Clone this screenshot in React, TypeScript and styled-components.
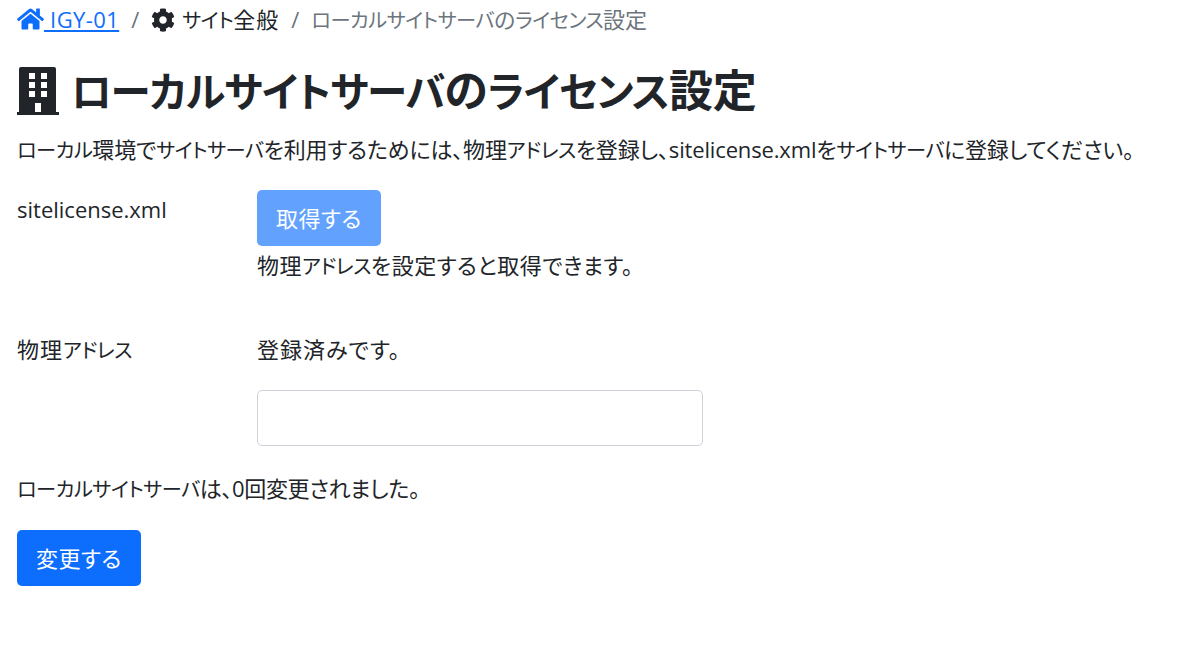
import React from 'react';
import styled, { createGlobalStyle } from 'styled-components';
import { FaCog, FaHome } from 'react-icons/fa';

const GlobalStyle = createGlobalStyle`
  html, body { margin: 0; padding: 0; background: #fff; }
  body {
    font-family: "Open Sans", "Noto Sans CJK JP", sans-serif;
    font-feature-settings: "palt";
    font-size: 22px;
    line-height: 33px;
    color: #212529;
  }
  * { box-sizing: border-box; }
`;

const Page = styled.div`
  padding: 3px 17px 0;
`;

const Breadcrumb = styled.nav`
  display: flex;
  align-items: center;
  height: 33px;
  margin-bottom: 25px;
`;

const CrumbLink = styled.a`
  color: #0d6efd;
  text-decoration: underline;
  white-space: pre;
  letter-spacing: 0.4px;
  svg {
    width: 27px;
    height: 24px;
    vertical-align: -3px;
  }
`;

const Crumb = styled.span`
  display: inline-flex;
  align-items: center;
  gap: 7px;
  letter-spacing: 1px;
  svg {
    width: 24px;
    height: 24px;
  }
`;

const Separator = styled.span`
  color: #6c757d;
  padding: 0 12px;
`;

const Current = styled.span`
  color: #6c757d;
`;

// katakana runs are set tighter, the reference font squeezes them
const KanaRun = styled.span`
  font-size: 0.92em;
  letter-spacing: -0.025em;
`;

const Title = styled.h1`
  display: flex;
  align-items: center;
  gap: 12px;
  height: 60px;
  margin: 0;
  font-size: 44px;
  line-height: 60px;
  font-weight: 700;
  letter-spacing: -0.1px;
`;

const TitleIcon = styled.svg`
  width: 42px;
  height: 48px;
  flex: none;
  fill: currentColor;
`;

const Lead = styled.p`
  margin: 12px 0 0;
  white-space: nowrap;
  letter-spacing: -0.15px;
`;

const FormRow = styled.div`
  display: grid;
  grid-template-columns: 240px 1fr;
  margin-top: 23px;
`;

const SecondRow = styled(FormRow)`
  margin-top: 50px;
`;

const Field = styled.div`
  min-width: 0;
`;

const FieldLabel = styled.div`
  padding-top: 3px;
`;

const SecondLabel = styled.div`
  letter-spacing: 1px;
`;

const Hint = styled.div`
  padding-top: 3px;
  letter-spacing: 0.5px;
`;

const Status = styled.div`
  letter-spacing: 1px;
`;

const Button = styled.button<{ $faded?: boolean }>`
  display: block;
  height: 56px;
  padding: 0 19px;
  border: 0;
  border-radius: 5px;
  font: inherit;
  letter-spacing: 0.5px;
  color: #fff;
  background: ${({ $faded }) => ($faded ? '#62a2fe' : '#0d6efd')};
`;

const Input = styled.input`
  display: block;
  width: 446px;
  height: 56px;
  margin-top: 24px;
  border: 1px solid #ced4da;
  border-radius: 5px;
`;

const Note = styled.p`
  margin: 26px 0 0;
  letter-spacing: -0.35px;
`;

const SubmitRow = styled.div`
  margin-top: 24px;
`;

const Jp = ({ text }: { text: string }): JSX.Element => (
  <>
    {text.split(/([ァ-ヶー]+)/).map((part, index) => (
      index % 2 === 1 ? <KanaRun key={index}>{part}</KanaRun> : part
    ))}
  </>
);

const BuildingIcon = (): JSX.Element => (
  <TitleIcon viewBox="0 0 42 48">
    <path fillRule="evenodd" d="M4 0h33a2 2 0 0 1 2 2v43h3v3H0v-3h2V2a2 2 0 0 1 2-2zM12 6v6h6V6zm12 0v6h6V6zM12 15v6h6v-6zm12 0v6h6v-6zM12 24v6h6v-6zm12 0v6h6v-6zM18 36v9h6v-9z" />
  </TitleIcon>
);

const App = (): JSX.Element => (
  <Page>
    <GlobalStyle />
    <Breadcrumb>
      <CrumbLink href="#"><FaHome /> IGY-01</CrumbLink>
      <Separator>/</Separator>
      <Crumb><FaCog /><span><Jp text="サイト全般" /></span></Crumb>
      <Separator>/</Separator>
      <Current><Jp text="ローカルサイトサーバのライセンス設定" /></Current>
    </Breadcrumb>
    <Title><BuildingIcon /><span><Jp text="ローカルサイトサーバのライセンス設定" /></span></Title>
    <Lead><Jp text="ローカル環境でサイトサーバを利用するためには、物理アドレスを登録し、sitelicense.xmlをサイトサーバに登録してください。" /></Lead>
    <FormRow>
      <FieldLabel>sitelicense.xml</FieldLabel>
      <Field>
        <Button $faded disabled>取得する</Button>
        <Hint><Jp text="物理アドレスを設定すると取得できます。" /></Hint>
      </Field>
    </FormRow>
    <SecondRow>
      <SecondLabel><Jp text="物理アドレス" /></SecondLabel>
      <Field>
        <Status>登録済みです。</Status>
        <Input />
      </Field>
    </SecondRow>
    <Note><Jp text="ローカルサイトサーバは、0回変更されました。" /></Note>
    <SubmitRow><Button>変更する</Button></SubmitRow>
  </Page>
);

export default App;
